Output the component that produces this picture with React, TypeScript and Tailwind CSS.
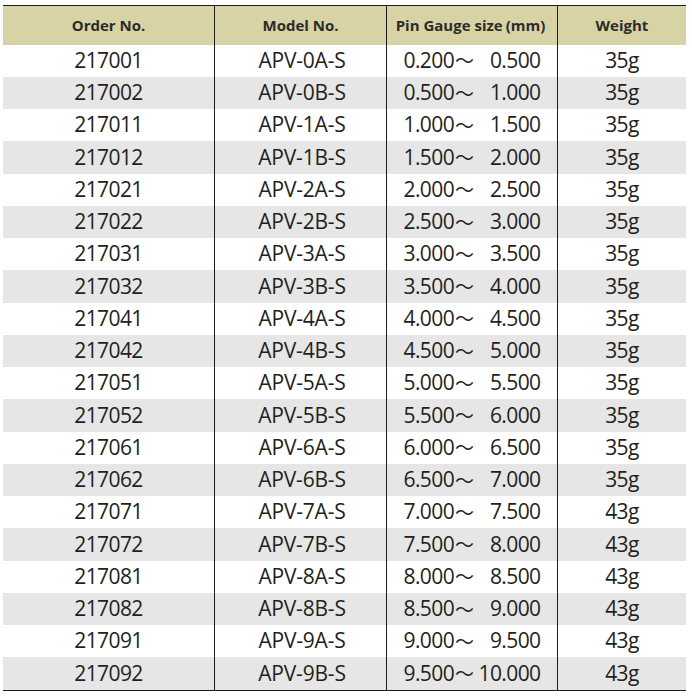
import React from 'react'

const rows: [string, string, string, string, string][] = [
  ['217001', 'APV-0A-S', '0.200', '0.500', '35g'],
  ['217002', 'APV-0B-S', '0.500', '1.000', '35g'],
  ['217011', 'APV-1A-S', '1.000', '1.500', '35g'],
  ['217012', 'APV-1B-S', '1.500', '2.000', '35g'],
  ['217021', 'APV-2A-S', '2.000', '2.500', '35g'],
  ['217022', 'APV-2B-S', '2.500', '3.000', '35g'],
  ['217031', 'APV-3A-S', '3.000', '3.500', '35g'],
  ['217032', 'APV-3B-S', '3.500', '4.000', '35g'],
  ['217041', 'APV-4A-S', '4.000', '4.500', '35g'],
  ['217042', 'APV-4B-S', '4.500', '5.000', '35g'],
  ['217051', 'APV-5A-S', '5.000', '5.500', '35g'],
  ['217052', 'APV-5B-S', '5.500', '6.000', '35g'],
  ['217061', 'APV-6A-S', '6.000', '6.500', '35g'],
  ['217062', 'APV-6B-S', '6.500', '7.000', '35g'],
  ['217071', 'APV-7A-S', '7.000', '7.500', '43g'],
  ['217072', 'APV-7B-S', '7.500', '8.000', '43g'],
  ['217081', 'APV-8A-S', '8.000', '8.500', '43g'],
  ['217082', 'APV-8B-S', '8.500', '9.000', '43g'],
  ['217091', 'APV-9A-S', '9.000', '9.500', '43g'],
  ['217092', 'APV-9B-S', '9.500', '10.000', '43g'],
]

const cols = 'grid grid-cols-[211px_172px_171px_129px]'
const line = 'border-l-[1.5px] border-[#1c1c1c]'

const App = () => {
  return (
    <div className="w-[692px] h-[696px] bg-white pt-[5px] pl-[3px] font-['Open_Sans','Noto_Sans_CJK_JP',sans-serif] text-[#231f20]">
      <div className="w-[683px] border-t-[1.5px] border-b-[1.5px] border-[#1c1c1c]">
        {/* header */}
        <div className={`${cols} h-[38.5px] bg-[#d7d3a5] text-[15px] font-bold text-[#2b2b2b]`}>
          <div className="flex items-center justify-center">Order No.</div>
          <div className={`flex items-center justify-center ${line}`}>Model No.</div>
          <div className={`flex items-center justify-center pr-[3px] ${line}`}>
            Pin Gauge size<span className="ml-[3px]">(mm)</span>
          </div>
          <div className={`flex items-center justify-center ${line}`}>Weight</div>
        </div>
        {/* rows */}
        {rows.map((r, i) => (
          <div key={r[0]} className={`${cols} h-[32.25px] text-[21px] ${i % 2 === 1 ? 'bg-[#e6e6e6]' : 'bg-white'}`}>
            <div className="flex items-center justify-center tracking-[-0.6px]">{r[0]}</div>
            <div className={`flex items-center justify-center pl-[3px] tracking-[-0.2px] ${line}`}>{r[1]}</div>
            <div className={`flex items-center justify-center tracking-[-0.6px] ${line}`}>
              <span>{r[2]}</span>
              <span className="font-['Noto_Sans_CJK_JP',sans-serif] text-[19px] mx-[1px]">〜</span>
              <span className="w-[66px] text-right">{r[3]}</span>
            </div>
            <div className={`flex items-center justify-center tracking-[-0.6px] ${line}`}>{r[4]}</div>
          </div>
        ))}
      </div>
    </div>
  )
}

export default App
